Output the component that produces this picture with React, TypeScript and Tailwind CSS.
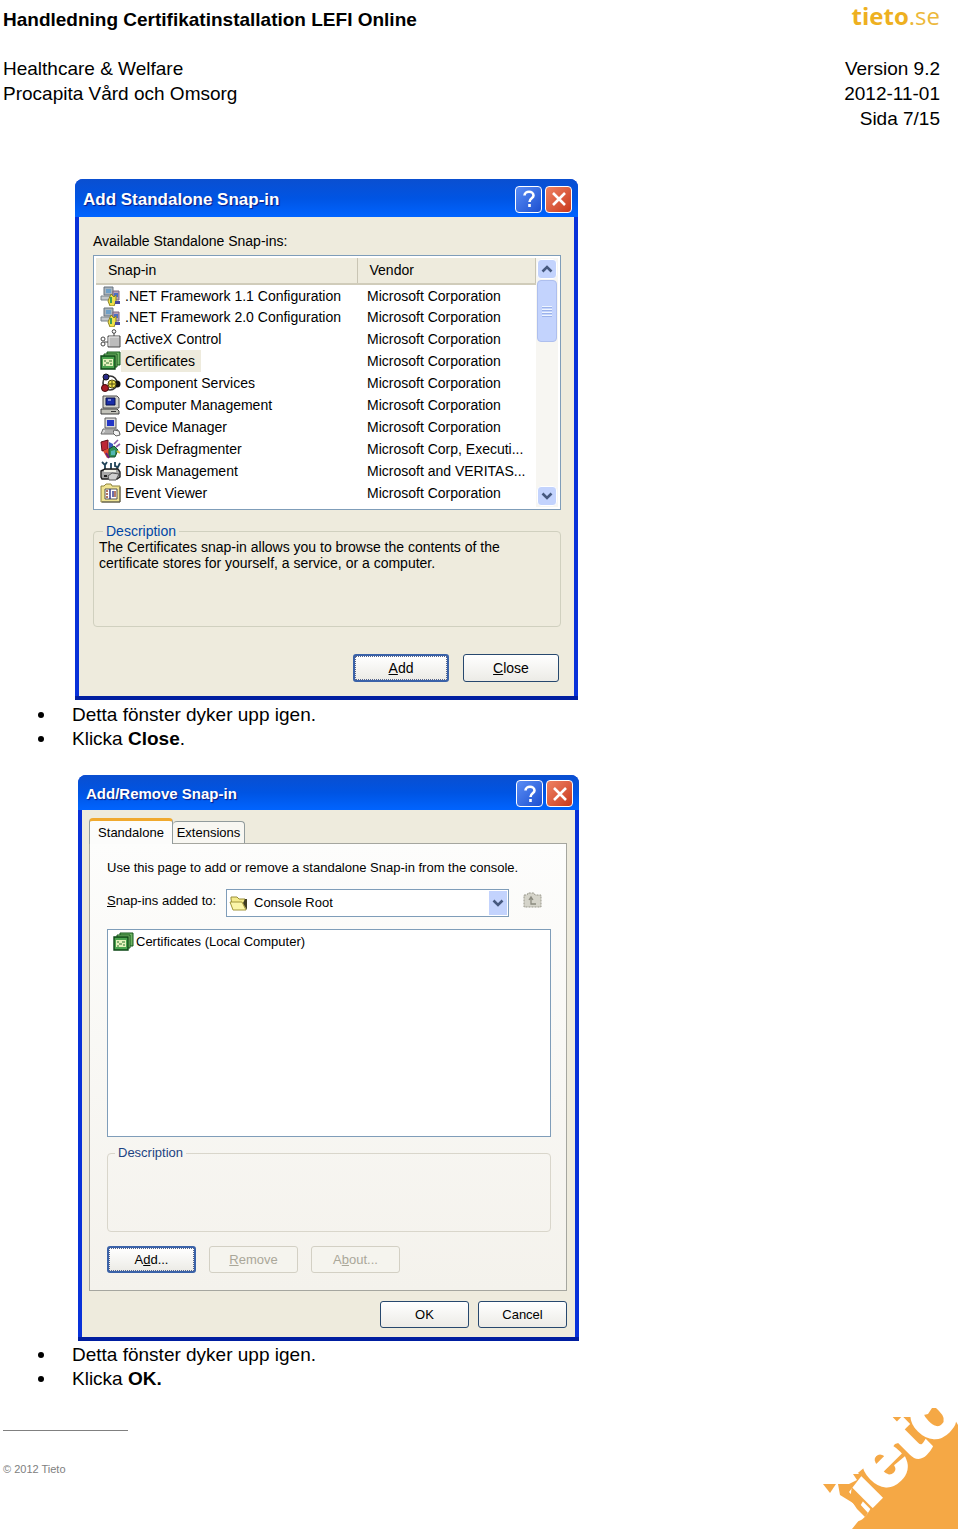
import type { ReactNode } from "react";

type IconName = "net" | "activex" | "cert" | "component" | "computer" | "device" | "defrag" | "disk" | "event";

const snapIns: { name: string; vendor: string; icon: IconName; selected?: boolean }[] = [
  { name: ".NET Framework 1.1 Configuration", vendor: "Microsoft Corporation", icon: "net" },
  { name: ".NET Framework 2.0 Configuration", vendor: "Microsoft Corporation", icon: "net" },
  { name: "ActiveX Control", vendor: "Microsoft Corporation", icon: "activex" },
  { name: "Certificates", vendor: "Microsoft Corporation", icon: "cert", selected: true },
  { name: "Component Services", vendor: "Microsoft Corporation", icon: "component" },
  { name: "Computer Management", vendor: "Microsoft Corporation", icon: "computer" },
  { name: "Device Manager", vendor: "Microsoft Corporation", icon: "device" },
  { name: "Disk Defragmenter", vendor: "Microsoft Corp, Executi...", icon: "defrag" },
  { name: "Disk Management", vendor: "Microsoft and VERITAS...", icon: "disk" },
  { name: "Event Viewer", vendor: "Microsoft Corporation", icon: "event" },
];

const drawings: Record<IconName, ReactNode> = {
  net: (
    <>
      <path d="M4 1h9v8H4z" fill="#a9b4bd" stroke="#68737d" />
      <path d="M6 3h5v4H6z" fill="#6fa0c8" />
      <path d="M1 10h10v4H1z" fill="#c3c8cc" stroke="#78828a" />
      <path d="M13 5h6v9h-6z" fill="#b9a3b8" stroke="#7c6680" />
      <path d="M14 7h4v4h-4z" fill="#4b6fc4" />
      <path d="M8 15l3-7 3 3 2-2v6l-2 5h-4z" fill="#efe04a" stroke="#8d8526" />
      <path d="M15 15h5v3h-5z" fill="#46499b" />
      <path d="M11 11v6" stroke="#3f9d55" strokeWidth="2" />
    </>
  ),
  activex: (
    <>
      <path d="M8 7h12v11H8z" fill="#bcbcbc" stroke="#4b4b4b" />
      <path d="M9 17V8h10" fill="none" stroke="#eee" />
      <path d="M14 7V4M8 13H4" stroke="#444" />
      <circle cx="14" cy="2.5" r="1.8" fill="#fff" stroke="#444" />
      <circle cx="3" cy="10" r="2" fill="#fff" stroke="#444" />
      <circle cx="3" cy="15" r="2" fill="#fff" stroke="#444" />
    </>
  ),
  cert: (
    <>
      <path d="M7 1h13v13H7z" fill="#6fb565" stroke="#14571a" />
      <path d="M4 3h13v13H4z" fill="#8fd07c" stroke="#14571a" />
      <path d="M1 5h14v13H1z" fill="#4ba44f" stroke="#0d4716" strokeWidth="1.4" />
      <path d="M3 8h10v7H3z" fill="#e6f2bd" />
      <path d="M4 10h2M9 10h3M6 12h3M4 14h2M10 13h2" stroke="#29722e" strokeWidth="1.2" />
    </>
  ),
  component: (
    <>
      <circle cx="10" cy="10" r="7" fill="none" stroke="#333" strokeWidth="1.6" />
      <circle cx="6" cy="4" r="3" fill="#292a86" stroke="#111" />
      <circle cx="5" cy="15" r="3.5" fill="#a51c24" stroke="#45090b" />
      <circle cx="17" cy="11" r="3.5" fill="#111" />
      <circle cx="12" cy="11" r="4" fill="#eee14b" stroke="#514d13" />
      <path d="M12 8v6M9 11h6" stroke="#514d13" />
    </>
  ),
  computer: (
    <>
      <path d="M3 1h14l2 2v10H3z" fill="#d0d0c8" stroke="#4c4c4c" />
      <path d="M6 3h9v7H6z" fill="#1b2fa8" stroke="#0a124e" />
      <path d="M8 5h3" stroke="#e5eaff" />
      <path d="M1 14h16l2 2v3H1z" fill="#c2c2b9" stroke="#3d3d3d" />
      <path d="M11 16.5h5" stroke="#333" />
    </>
  ),
  device: (
    <>
      <path d="M5 1h11v10H5z" fill="#d8d8d8" stroke="#5d5d5d" />
      <path d="M7 3h7v6H7z" fill="#2336c6" />
      <path d="M3 12h14l3 5H1z" fill="#d7d7d7" stroke="#696969" />
      <path d="M5 14h9M4 16h8" stroke="#878787" />
      <path d="M14 13l5 1 1 4-4 1-3-3z" fill="#f3f3f3" stroke="#626262" />
    </>
  ),
  defrag: (
    <>
      <path d="M1 3l7-2v9l-6 2z" fill="#bd2636" stroke="#5e0f18" />
      <path d="M9 3l4 2v7H9z" fill="#3958bf" />
      <path d="M3 12l6-3 2 8-4 2z" fill="#e04a32" />
      <path d="M9 10l5-3 4 4-3 7H9z" fill="#2f8e55" stroke="#174e2e" />
      <path d="M11 12l4-1v5h-4z" fill="#51b6b3" />
      <path d="M14 5l4-4M16 8l4-3" stroke="#8a5ba7" strokeWidth="1.6" />
      <path d="M6 14l3 5" stroke="#6a2378" strokeWidth="2" />
      <path d="M17 12l3 2" stroke="#d8bf3e" strokeWidth="2" />
    </>
  ),
  disk: (
    <>
      <path d="M2 1l3 3v5M7 1l-2 3M11 2v7M15 1v4l3 1 2-4M17 6v5" fill="none" stroke="#1f4358" strokeWidth="1.8" />
      <path d="M1 10l4-2h13l2 3v5l-3 2H2l-1-2z" fill="#a8a8a8" stroke="#222" strokeWidth="1.4" />
      <path d="M4 10h12" stroke="#f1f1e8" strokeWidth="2" />
      <path d="M8 15l4-3 7 1-3 6H9z" fill="#cfcfcf" stroke="#555" />
      <path d="M4 15h3" stroke="#222" strokeWidth="2" />
    </>
  ),
  event: (
    <>
      <path d="M1 3h3l2-2h5l1 2h8v16H1z" fill="#f0e493" stroke="#8d823f" />
      <path d="M5 6h12v10H5z" fill="#fff" stroke="#555" />
      <path d="M10 6v10M13 8v6" stroke="#2c318a" strokeWidth="1.4" />
      <path d="M6 8h2M6 11h2M6 14h2M15 8v6" stroke="#9b452b" strokeWidth="1.4" />
      <path d="M20 4v15H2" fill="none" stroke="#555" />
    </>
  ),
};

function SnapIcon({ name }: { name: IconName }) {
  return (
    <svg viewBox="0 0 21 20" className="w-[21px] h-5 shrink-0" aria-hidden="true">
      {drawings[name]}
    </svg>
  );
}

function Chevron({ up = false }: { up?: boolean }) {
  return (
    <svg viewBox="0 0 12 8" className="w-3 h-2" aria-hidden="true">
      <path d={up ? "M1.5 6.5L6 2l4.5 4.5" : "M1.5 1.5L6 6l4.5-4.5"} fill="none" stroke="#46597f" strokeWidth="2.6" />
    </svg>
  );
}

function TitleButton({ kind }: { kind: "help" | "close" }) {
  const color =
    kind === "help"
      ? "bg-linear-to-br from-[#5b8df5] to-[#1c4fd0]"
      : "bg-linear-to-br from-[#ee8263] to-[#c9371a]";
  return (
    <button
      type="button"
      aria-label={kind === "help" ? "Help" : "Close window"}
      className={`w-[27px] h-[27px] rounded-sm border border-white flex items-center justify-center ${color}`}
    >
      <svg viewBox="0 0 20 20" className="w-5 h-5" fill="none" stroke="#fff" strokeWidth="2.6" aria-hidden="true">
        {kind === "help" ? (
          <path d="M5.5 6.5C5.500 1.500 14.500 1.500 14.500 6.500C14.500 9.500 10.500 9 10.500 13M10.500 15v3" />
        ) : (
          <path d="M4 4l12 12M16 4L4 16" />
        )}
      </svg>
    </button>
  );
}

function Dialog({ title, titleClass, children }: { title: string; titleClass: string; children: ReactNode }) {
  return (
    <section className="w-full rounded-t-lg bg-[#0831d9] border-b-4 border-[#001ea0]">
      <div
        className={`flex items-center justify-between rounded-t-lg pt-0.5 pl-2 pr-1.5 bg-linear-to-b from-[#0a4fd0] via-[#0054e3] to-[#0064ff] ${titleClass}`}
      >
        <h2 className="pt-0.5 font-bold text-white [text-shadow:1px_1px_1px_#0a1883]">{title}</h2>
        <div className="flex gap-[3px]">
          <TitleButton kind="help" />
          <TitleButton kind="close" />
        </div>
      </div>
      <div className="mx-1 bg-[#eeebdd]">{children}</div>
    </section>
  );
}

function XpButton({
  children,
  focused = false,
  disabled = false,
  size,
}: {
  children: ReactNode;
  focused?: boolean;
  disabled?: boolean;
  size: string;
}) {
  const look = disabled
    ? "border border-[#d3d0c4] bg-[#f5f4ee] text-[#aaa799]"
    : focused
      ? "border-2 border-[#3a62a8] bg-linear-to-b from-white to-[#ecebe6] text-black"
      : "border border-[#27486e] bg-linear-to-b from-white to-[#ecebe6] text-black";
  return (
    <button type="button" disabled={disabled} className={`relative rounded-[3px] ${size} ${look}`}>
      {focused && <span className="absolute inset-0 border border-dotted border-[#56658c]" />}
      {children}
    </button>
  );
}

function Steps({ word, end }: { word: string; end?: string }) {
  return (
    <ul className="pl-[38px] text-[19px] leading-6">
      {["Detta fönster dyker upp igen.", "Klicka "].map((text, i) => (
        <li key={text} className="flex items-center gap-7">
          <span className="w-1.5 h-1.5 rounded-full bg-black" />
          <span>
            {text}
            {i === 1 && <b>{word}</b>}
            {i === 1 && end}
          </span>
        </li>
      ))}
    </ul>
  );
}

function AddStandaloneDialog() {
  return (
    <Dialog title="Add Standalone Snap-in" titleClass="h-[38px] text-[17px]">
      <div className="pl-3.5 pr-[13px] pt-3 pb-3.5 text-sm leading-4">
        <p className="py-1">Available Standalone Snap-ins:</p>
        <div className="mt-0.5 flex border border-[#7f9db9] bg-white p-0.5">
          <table className="flex-1 table-fixed border-collapse text-left mb-[3px]">
            <thead>
              <tr className="h-[26px] bg-[#eeebdd] border-b-2 border-[#d0ccba]">
                <th className="w-[261px] pl-3 pb-0.5 font-normal border-r border-[#c9c5b4]">Snap-in</th>
                <th className="pl-3 pb-0.5 font-normal border-r border-[#c9c5b4]">Vendor</th>
              </tr>
            </thead>
            <tbody>
              {snapIns.map((item) => (
                <tr key={item.name} className="h-[22px]">
                  <td className="pl-1 whitespace-nowrap">
                    <div className="flex items-center">
                      <SnapIcon name={item.icon} />
                      <span className={item.selected ? "bg-[#eeebdd] pl-1 pr-1.5 py-[3px]" : "pl-1"}>{item.name}</span>
                    </div>
                  </td>
                  <td className="pl-2.5 whitespace-nowrap">{item.vendor}</td>
                </tr>
              ))}
            </tbody>
          </table>
          <div className="w-[22px] flex flex-col bg-[#f7f6f2]">
            <button
              type="button"
              aria-label="Scroll up"
              className="h-5 m-px rounded-sm bg-[#c3d3fd] border border-white flex items-center justify-center"
            >
              <Chevron up />
            </button>
            <div className="h-[62px] mx-px rounded-sm bg-[#c3d3fd] border border-[#aebfee] flex flex-col items-center justify-center gap-px">
              {[0, 1, 2, 3].map((n) => (
                <span key={n} className="w-2.5 h-0.5 border-t border-[#eef4fe] bg-[#9bb2ea]" />
              ))}
            </div>
            <button
              type="button"
              aria-label="Scroll down"
              className="h-5 m-px mt-auto rounded-sm bg-[#c3d3fd] border border-white flex items-center justify-center"
            >
              <Chevron />
            </button>
          </div>
        </div>
        <fieldset className="mt-[13px] h-[104px] rounded-sm border border-[#d0d0bf] px-[5px]">
          <legend className="ml-1 px-[3px] text-[#0046a5]">Description</legend>
          <p>The Certificates snap-in allows you to browse the contents of the certificate stores for yourself, a service, or a computer.</p>
        </fieldset>
        <div className="mt-[27px] pr-0.5 flex justify-end gap-3.5">
          <XpButton focused size="w-24 h-7">
            <u>A</u>dd
          </XpButton>
          <XpButton size="w-24 h-7">
            <u>C</u>lose
          </XpButton>
        </div>
      </div>
    </Dialog>
  );
}

function AddRemoveDialog() {
  return (
    <Dialog title="Add/Remove Snap-in" titleClass="h-[35px] text-[15px]">
      <div className="pl-[7px] pr-2 pt-2 pb-[9px] text-[13px] leading-4">
        <div role="tablist" className="flex items-end">
          <button
            type="button"
            role="tab"
            aria-selected="true"
            className="relative z-10 -mb-px w-[84px] h-[26px] rounded-t-sm border-x border-t-[3px] border-x-[#919b9c] border-t-[#f0a92e] bg-[#fcfcfb]"
          >
            Standalone
          </button>
          <button
            type="button"
            role="tab"
            aria-selected="false"
            className="w-[72px] h-[22px] rounded-t-sm border border-l-0 border-b-0 border-[#919b9c] bg-[#f8f7f2]"
          >
            Extensions
          </button>
        </div>
        <div className="border border-[#a5a69f] bg-linear-to-b from-[#fdfdfc] to-[#f4f2ec] pl-[17px] pr-[15px] pt-4 pb-[17px]">
          <p>Use this page to add or remove a standalone Snap-in from the console.</p>
          <div className="mt-[13px] flex items-center">
            <label htmlFor="added-to" className="w-[119px] pb-1">
              <u>S</u>nap-ins added to:
            </label>
            <div className="relative flex-1">
              <select
                id="added-to"
                className="w-full h-7 appearance-none border border-[#7f9db9] bg-white pl-[27px] pr-6 text-[13px] text-black"
              >
                <option>Console Root</option>
              </select>
              <svg viewBox="0 0 20 16" className="absolute left-[3px] top-1.5 w-5 h-4 pointer-events-none" aria-hidden="true">
                <path d="M2 4V2h6l2 2h6v10H4z" fill="#f5eb8c" stroke="#9a8f3a" />
                <path d="M1 7h12l4 8H4z" fill="#fbf5a8" stroke="#a2963a" />
                <path d="M16 4h2v11l-4-7" fill="#3f3c22" />
              </svg>
              <span className="absolute right-0.5 top-0.5 w-[18px] h-6 bg-[#c3d3fd] flex items-center justify-center pointer-events-none">
                <Chevron />
              </span>
            </div>
            <button type="button" disabled aria-label="Up one level" className="ml-3.5 mr-2 pb-1.5">
              <svg viewBox="0 0 20 18" className="w-5 h-[18px]" aria-hidden="true">
                <path d="M1 4h3l1-2h6l1 2h6v12H1z" fill="#d5d4ca" stroke="#99988c" strokeDasharray="2 1" />
                <path d="M6 9l2-3 2 3M8 7v6h5" fill="none" stroke="#8b8a7f" strokeWidth="1.3" />
              </svg>
            </button>
          </div>
          <ul className="mt-3 h-[208px] border border-[#7f9db9] bg-white px-[5px] py-0.5">
            <li className="flex items-center gap-0.5">
              <SnapIcon name="cert" />
              <span>Certificates (Local Computer)</span>
            </li>
          </ul>
          <fieldset className="mt-2 h-[87px] rounded-sm border border-[#d9d6cb]">
            <legend className="ml-[7px] px-[3px] text-[#1c4382]">Description</legend>
          </fieldset>
          <div className="mt-3.5 flex gap-[13px]">
            <XpButton focused size="w-[89px] h-[27px]">
              A<u>d</u>d...
            </XpButton>
            <XpButton disabled size="w-[89px] h-[27px]">
              <u>R</u>emove
            </XpButton>
            <XpButton disabled size="w-[89px] h-[27px]">
              A<u>b</u>out...
            </XpButton>
          </div>
        </div>
        <div className="mt-2.5 flex justify-end gap-[9px]">
          <XpButton size="w-[89px] h-[27px]">OK</XpButton>
          <XpButton size="w-[89px] h-[27px]">Cancel</XpButton>
        </div>
      </div>
    </Dialog>
  );
}

function CornerLogo() {
  return (
    <svg viewBox="0 -24 140 156" className="-mt-6 w-[140px] h-[156px]" role="img" aria-label="tieto">
      <path
        d="M33 76L45 66L64 47H72L75 43L85 40L79 24L72 16H95L108 13L112 7H128L138 24V128H32L40 118L30 100Z"
        fill="#f5a845"
      />
      <text
        x="31"
        y="126"
        transform="rotate(-45 31 126)"
        fill="#fff"
        stroke="#fff"
        strokeWidth="4"
        fontFamily="'Liberation Sans', Arial, sans-serif"
        fontWeight="700"
        fontSize="76"
      >
        tieto
      </text>
      {/* corners above the first letters and the gap between them */}
      <path d="M3 83H16L10 92Z" fill="#f5a845" />
      <path d="M18 83H29L37 79L33 73H43L29 91L48 112L45 116L37 108L33 102L20 94Z" fill="#f5a845" />
    </svg>
  );
}

export default function App() {
  return (
    <div className="bg-white text-black font-['Liberation_Sans',Arial,sans-serif]">
      <header className="flex justify-between pl-[3px] pr-5 pt-[7px] text-[19px] leading-[25px]">
        <div>
          <h1 className="font-bold">Handledning Certifikatinstallation LEFI Online</h1>
          <p className="mt-6">Healthcare &amp; Welfare</p>
          <p>Procapita Vård och Omsorg</p>
        </div>
        <div className="text-right">
          <p className="font-['Open_Sans',sans-serif] text-2xl leading-[17px] pb-2 text-[#ecb83a]">
            <b className="text-[#eeb020]">tieto</b>.se
          </p>
          <p className="mt-6">Version 9.2</p>
          <p>2012-11-01</p>
          <p>Sida 7/15</p>
        </div>
      </header>

      <main>
        <div className="mt-12 ml-[75px] max-w-[503px]">
          <AddStandaloneDialog />
        </div>
        <div className="mt-[3px]">
          <Steps word="Close" end="." />
        </div>
        <div className="mt-6 ml-[78px] max-w-[501px]">
          <AddRemoveDialog />
        </div>
        <div className="mt-0.5">
          <Steps word="OK." />
        </div>
      </main>

      <footer className="flex justify-between pl-[3px] mt-2.5">
        <div className="pt-[29px]">
          <hr className="w-[125px] border-[#808080]" />
          <p className="mt-[30px] text-[11px] leading-4 text-[#808080]">© 2012 Tieto</p>
        </div>
        <CornerLogo />
      </footer>
    </div>
  );
}
